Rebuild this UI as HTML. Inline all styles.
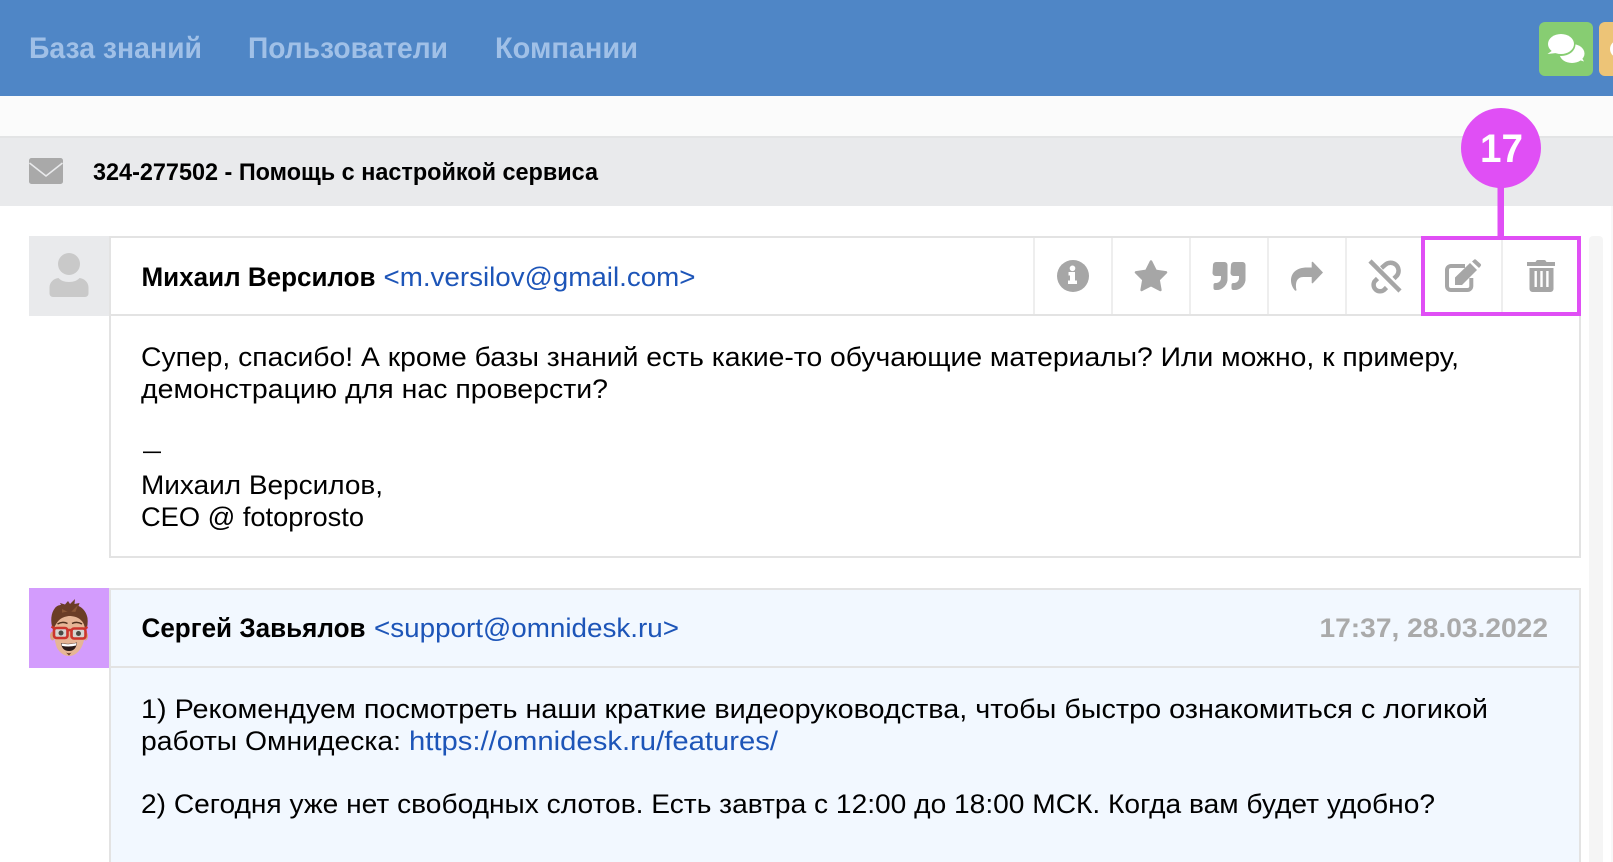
<!DOCTYPE html>
<html lang="ru">
<head>
<meta charset="utf-8">
<title>Тикет</title>
<style>
html,body{margin:0;padding:0;background:#fff;width:1613px;height:862px;overflow:hidden}
svg{display:block;position:absolute;left:0;top:0}
text{font-family:"Liberation Sans","DejaVu Sans",sans-serif;white-space:pre}
.nav{font-size:30px;font-weight:700;fill:#a0c0e7}
.b{font-size:27px;fill:#000}
.bb{font-size:27px;font-weight:700;fill:#000}
.l{font-size:27px;fill:#1d55b8}
</style>
</head>
<body>
<svg width="1613" height="862" viewBox="0 0 1613 862" xmlns="http://www.w3.org/2000/svg">
<rect width="1613" height="862" fill="#fff"/>
<!-- top bar -->
<rect width="1613" height="96" fill="#4f86c6"/>
<text class="nav" x="29" y="58" textLength="173" lengthAdjust="spacingAndGlyphs">База знаний</text>
<text class="nav" x="248" y="58" textLength="200" lengthAdjust="spacingAndGlyphs">Пользователи</text>
<text class="nav" x="495" y="58" textLength="143" lengthAdjust="spacingAndGlyphs">Компании</text>
<rect x="1539" y="22" width="54" height="54" rx="6" fill="#87cd72"/>
<rect x="1599" y="22" width="30" height="54" rx="6" fill="#edc477"/>
<ellipse cx="1622" cy="49" rx="12" ry="10" fill="#fff"/>
<ellipse cx="1572" cy="53.5" rx="12.5" ry="9.5" fill="#fff"/>
<path d="M1576 59l8 2.500-4-7z" fill="#fff"/>
<ellipse cx="1561" cy="44.500" rx="14.500" ry="11.500" fill="#87cd72"/>
<ellipse cx="1561" cy="44" rx="13" ry="10" fill="#fff"/>
<path d="M1553 50l-5.500 4 9-1z" fill="#fff"/>
<!-- sub bands -->
<rect y="96" width="1613" height="40" fill="#fbfbfb"/>
<rect y="136" width="1613" height="2" fill="#e3e4e5"/>
<rect y="138" width="1613" height="68" fill="#e9eaec"/>
<rect x="1611" y="206" width="2" height="656" fill="#f8f8f8"/>
<!-- mail icon -->
<rect x="29" y="158" width="34" height="26" rx="2.500" fill="#a9a9a9"/>
<path d="M29.500 163L46 176L62.500 163" fill="none" stroke="#e9eaec" stroke-width="1.600"/>
<text x="93" y="180" font-size="24" font-weight="700" fill="#000" textLength="505" lengthAdjust="spacingAndGlyphs">324-277502 - Помощь с настройкой сервиса</text>
<!-- scrollbar -->
<path d="M1589 862V240a4 4 0 0 1 4-4h6a4 4 0 0 1 4 4V862z" fill="#f5f5f5"/>
<!-- card 1 -->
<rect x="29" y="236" width="80" height="80" fill="#e9eaec"/>
<circle cx="69" cy="264" r="11" fill="#c9c9c9"/>
<path d="M53 297a3.500 3.500 0 0 1-3.500-3.500v-6c0-5 4-9 9-9.500 2 2.500 6 4 10.500 4s8.500-1.500 10.500-4c5 .5 9 4.500 9 9.500v6a3.500 3.500 0 0 1-3.500 3.500z" fill="#c9c9c9"/>
<rect x="110" y="237" width="1470" height="320" fill="#fff" stroke="#e3e3e3" stroke-width="2"/>
<rect x="110" y="314" width="1470" height="2" fill="#e3e3e3"/>
<g fill="#eeeeee">
<rect x="1033" y="238" width="2" height="76"/>
<rect x="1111" y="238" width="2" height="76"/>
<rect x="1189" y="238" width="2" height="76"/>
<rect x="1267" y="238" width="2" height="76"/>
<rect x="1345" y="238" width="2" height="76"/>
<rect x="1501" y="238" width="2" height="76"/>
</g>
<text class="bb" x="141.500" y="286" textLength="234" lengthAdjust="spacingAndGlyphs">Михаил Версилов</text>
<text class="l" x="383.500" y="286" textLength="312" lengthAdjust="spacingAndGlyphs">&lt;m.versilov@gmail.com&gt;</text>
<!-- icons -->
<g fill="#a6a6a6">
<circle cx="1073" cy="276" r="16"/>
<path d="M1072.500 265.500a2.800 2.800 0 1 1-.01 0zM1068.500 272h6.500v8.500h2v3.500h-9v-3.500h2v-5h-1.500z" fill="#fff"/>
<path d="M1151 261.500l4.700 9.300 10.300 1.600-7.400 7.300 1.800 10.300-9.400-4.900-9.400 4.900 1.800-10.300-7.400-7.300 10.300-1.600z" stroke="#a6a6a6" stroke-width="2.500" stroke-linejoin="round"/>
<path d="M1213 265a3 3 0 0 1 3-3h8.500a3 3 0 0 1 3 3v13a11 11 0 0 1-11 12h-1a2 2 0 0 1-2-2v-3a2 2 0 0 1 2-2h1a5 5 0 0 0 4.500-5v-2h-5.500a3 3 0 0 1-3-3z"/>
<path d="M1231 265a3 3 0 0 1 3-3h8.500a3 3 0 0 1 3 3v13a11 11 0 0 1-11 12h-1a2 2 0 0 1-2-2v-3a2 2 0 0 1 2-2h1a5 5 0 0 0 4.500-5v-2h-5.500a3 3 0 0 1-3-3z"/>
<path d="M1323 272.500l-10-10.500c-.6-.6-1.300-.2-1.300.5v5h-4.700c-10 0-16 5-16 13 0 4 2 8 4 10 1 .5 1.700 0 1.400-1-1.200-6 0-12.500 7-12.500h8.300v5.500c0 .8.700 1.100 1.300.5z"/>
<!-- edit pencil -->
<path d="M1455 285v-7.500l15-14.500 7 7-15 15z"/>
<path d="M1472 261.500l2-1.800a1.500 1.500 0 0 1 2 0l4.700 4.300a1.500 1.500 0 0 1 0 2l-1.700 2z"/>
<!-- trash -->
<path d="M1535.500 262l.8-1.200a1.500 1.500 0 0 1 1.200-.800h7a1.500 1.500 0 0 1 1.200 .8l.8 1.200z"/>
<rect x="1527" y="262" width="28" height="4"/>
<path d="M1529.500 268h24v21a3 3 0 0 1-3 3h-18a3 3 0 0 1-3-3z"/>
<rect x="1534.500" y="271" width="2.400" height="16" fill="#fff"/>
<rect x="1540.300" y="271" width="2.400" height="16" fill="#fff"/>
<rect x="1546.200" y="271" width="2.400" height="16" fill="#fff"/>
</g>
<g fill="none" stroke="#a6a6a6" stroke-width="4.500">
<path d="M1370 261L1400 291"/>
<path d="M1381.500 268l3.500-3a8 8 0 0 1 12 10.500l-3 3"/>
<path d="M1377.500 278.500l-3 3a6.500 6.500 0 0 0 9.500 8.500l2.500-2.500"/>
</g>
<path d="M1465 266h-14a4 4 0 0 0-4 4v16a4 4 0 0 0 4 4h16.300a4 4 0 0 0 4-4v-8" fill="none" stroke="#a6a6a6" stroke-width="4"/>
<!-- body 1 -->
<text class="b" x="141" y="366" textLength="1318" lengthAdjust="spacingAndGlyphs">Супер, спасибо! А кроме базы знаний есть какие-то обучающие материалы? Или можно, к примеру,</text>
<text class="b" x="141" y="398" textLength="467" lengthAdjust="spacingAndGlyphs">демонстрацию для нас проверсти?</text>
<rect x="143" y="451.500" width="18" height="1.600" fill="#000"/>
<text class="b" x="141" y="494" textLength="242" lengthAdjust="spacingAndGlyphs">Михаил Версилов,</text>
<text class="b" x="141" y="526" textLength="223" lengthAdjust="spacingAndGlyphs">CEO @ fotoprosto</text>
<!-- card 2 -->
<rect x="29" y="588" width="80" height="80" fill="#d39cfd"/>
<!-- memoji -->
<path d="M53 630c-3-9-2-17 2-22 1.500-2 4-3 6-3l-1-2 5 1.500 3-3.500 2 3 5-5-.5 5 5-1-1 3c5 2 8 7 9 12 .5 4 0 9-1.500 13l-4 2H57z" fill="#6b3d26"/>
<path d="M62 609l8 4 8-8-3 8 7 3c-5-2-14-3-20-1z" fill="#8a5636"/>
<ellipse cx="52.500" cy="636" rx="2.500" ry="4.500" fill="#d9a484"/>
<ellipse cx="85.500" cy="636" rx="2.500" ry="4.500" fill="#d9a484"/>
<path d="M54 630c0-9 6-14 15-14s16 5 16 14c0 6-1 13-4 18-3 5-7 8-12 8s-9-3-12-8c-2-5-3-12-3-18z" fill="#e6b595"/>
<path d="M54 628c2-4 4-8 8-10 6-3 14-3 18 0 3 2 4 6 5 10l1-6c-1-6-5-9-10-10-8-1-16 0-19 4-3 3-4 7-3 12z" fill="#6b3d26"/>
<path d="M57.500 624q5-3 10-.5M72 623.500q5-2.500 10 .5" fill="none" stroke="#4f2f1d" stroke-width="1.500"/>
<rect x="54" y="628" width="13.500" height="10" rx="2.500" fill="#d6d4d0" stroke="#cc352c" stroke-width="2.600"/>
<rect x="71.500" y="628.500" width="14" height="10" rx="2.500" fill="#d6d4d0" stroke="#cc352c" stroke-width="2.600"/>
<path d="M51.500 626.500l3 2M67 630.500q2.500-1 5 0M85 628.500l2.500-1.500" stroke="#cc352c" stroke-width="2.400" fill="none"/>
<circle cx="61" cy="633" r="2.500" fill="#4a4a44"/>
<circle cx="78.500" cy="633.500" r="2.500" fill="#4a4a44"/>
<path d="M61 643q8 2 16-.5q-1 8.500-8 8.500t-8-8z" fill="#2b1a18"/>
<path d="M61.500 643.500q7.500 1.700 15-.5l-.5 2.500q-6.500 1.800-14 .4z" fill="#fff"/>
<path d="M66 652.500q3 1.500 5.500 0l-2.500 3z" fill="#6b3d26"/>
<rect x="110" y="589" width="1470" height="280" fill="#f2f8ff" stroke="#e3e3e3" stroke-width="2"/>
<rect x="110" y="666" width="1470" height="2" fill="#e3e3e3"/>
<text class="bb" x="141.500" y="637" textLength="224" lengthAdjust="spacingAndGlyphs">Сергей Завьялов</text>
<text class="l" x="374" y="637" textLength="305" lengthAdjust="spacingAndGlyphs">&lt;support@omnidesk.ru&gt;</text>
<text x="1319.500" y="637" font-size="27" font-weight="700" fill="#aaaaaa" textLength="228.500" lengthAdjust="spacingAndGlyphs">17:37, 28.03.2022</text>
<text class="b" x="141" y="718" textLength="1347" lengthAdjust="spacingAndGlyphs">1) Рекомендуем посмотреть наши краткие видеоруководства, чтобы быстро ознакомиться с логикой</text>
<text class="b" x="141" y="750" textLength="260" lengthAdjust="spacingAndGlyphs">работы Омнидеска:</text>
<text class="l" x="409" y="750" textLength="369" lengthAdjust="spacingAndGlyphs">https://omnidesk.ru/features/</text>
<text class="b" x="141" y="813" textLength="1294" lengthAdjust="spacingAndGlyphs">2) Сегодня уже нет свободных слотов. Есть завтра с 12:00 до 18:00 МСК. Когда вам будет удобно?</text>
<!-- annotation -->
<rect x="1423" y="238" width="156" height="76" fill="none" stroke="#e04ff5" stroke-width="4"/>
<rect x="1497.500" y="186" width="6.500" height="50" fill="#e04ff5"/>
<circle cx="1501" cy="148" r="40" fill="#e04ff5"/>
<text x="1480" y="162" font-size="40" font-weight="700" fill="#fff" textLength="43" lengthAdjust="spacingAndGlyphs">17</text>
</svg>
</body>
</html>
